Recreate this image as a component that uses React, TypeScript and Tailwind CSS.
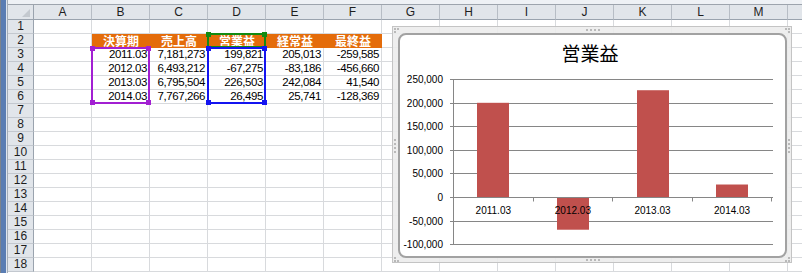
const COLS = ["A", "B", "C", "D", "E", "F", "G", "H", "I", "J", "K", "L", "M", ""];
const HEAD = ["決算期", "売上高", "営業益", "経常益", "最終益"];
const DATA = [
  ["2011.03", "7,181,273", "199,821", "205,013", "-259,585"],
  ["2012.03", "6,493,212", "-67,275", "-83,186", "-456,660"],
  ["2013.03", "6,795,504", "226,503", "242,084", "41,540"],
  ["2014.03", "7,767,266", "26,495", "25,741", "-128,369"],
];
const CHART = [
  { label: "2011.03", value: 199821 },
  { label: "2012.03", value: -67275 },
  { label: "2013.03", value: 226503 },
  { label: "2014.03", value: 26495 },
];
const TICKS = [250000, 200000, 150000, 100000, 50000, 0, -50000, -100000];

const ZERO = 126;
const K = 23.57 / 50000;
const yOf = (v: number) => Math.round(ZERO - v * K) + 0.5;
const fmt = (v: number) => v.toLocaleString("en-US");

function SheetRow({ n }: { n: number }) {
  const data = n >= 3 && n <= 6 ? DATA[n - 3] : null;
  return (
    <div className="flex h-[14px] shrink-0">
      <div className="w-[26px] shrink-0 border-r border-b border-r-[#9aa3ae] border-b-[#c3c8cf] bg-[#e1e5ea] text-center text-[12px] leading-[13px] text-[#1e1e1e]">
        {n}
      </div>
      {COLS.map((c, i) => {
        if (n === 2 && i >= 1 && i <= 5) {
          return (
            <div
              key={i}
              className="w-[58px] shrink-0 bg-[#e46c0a] text-center font-['Noto_Sans_CJK_JP',sans-serif] text-[12px] font-bold leading-[14px] text-white"
            >
              {HEAD[i - 1]}
            </div>
          );
        }
        return (
          <div
            key={i}
            className="w-[58px] shrink-0 overflow-hidden border-r border-b border-[#d8dadd] pr-[2px] text-right text-[11.5px] leading-[13px] tracking-[-0.4px] text-black"
          >
            {data && i >= 1 && i <= 5 ? data[i - 1] : ""}
          </div>
        );
      })}
    </div>
  );
}

function Dots({ vertical = false, count }: { vertical?: boolean; count: number }) {
  return (
    <div className={vertical ? "flex flex-col gap-[2px]" : "flex gap-[2px]"}>
      {Array.from({ length: count }).map((_, i) => (
        <span key={i} className="block h-[2px] w-[2px] bg-[#b9b9b9]" />
      ))}
    </div>
  );
}

function Chart() {
  const catW = 79.6;
  return (
    <div className="absolute left-[392px] top-[26px] flex h-[237px] w-[400px] border border-[#c4c4c4] bg-[#ececec]/90 pl-[5px] pt-[6px] pr-[4px] pb-[4px]">
      <div className="absolute left-[1px] top-[1px] grid grid-cols-2 gap-[1px]">
        <Dots count={1} />
        <Dots count={1} />
        <Dots count={1} />
      </div>
      <div className="absolute right-[1px] top-[1px] grid grid-cols-2 gap-[1px]">
        <Dots count={1} />
        <Dots count={1} />
        <span />
        <Dots count={1} />
      </div>
      <div className="absolute left-[1px] bottom-[0px] grid grid-cols-2 gap-[1px]">
        <Dots count={1} />
        <span />
        <Dots count={1} />
        <Dots count={1} />
      </div>
      <div className="absolute right-[1px] bottom-[0px] grid grid-cols-2 gap-[1px]">
        <span />
        <Dots count={1} />
        <Dots count={1} />
        <Dots count={1} />
      </div>
      <div className="absolute left-[193px] top-[2px]">
        <Dots count={4} />
      </div>
      <div className="absolute left-[193px] bottom-[1px]">
        <Dots count={4} />
      </div>
      <div className="absolute left-[1px] top-[112px]">
        <Dots vertical count={4} />
      </div>
      <div className="absolute right-[1px] top-[112px]">
        <Dots vertical count={4} />
      </div>

      <div className="flex flex-1 flex-col rounded-[8px] border-2 border-[#a2a2a2] bg-white">
        <div className="h-[36px] pr-[5px] text-center font-['Noto_Sans_CJK_JP',sans-serif] text-[19px] leading-[36px] text-black">
          営業益
        </div>
        <svg width="385" height="185" className="block font-['Liberation_Sans',sans-serif]">
          {TICKS.map((t) => (
            <line key={t} x1={50} x2={373} y1={yOf(t)} y2={yOf(t)} stroke="#868686" strokeWidth={1} />
          ))}
          <line x1={53.5} x2={53.5} y1={yOf(250000)} y2={yOf(-100000)} stroke="#868686" strokeWidth={1} />
          {[0, 1, 2, 3, 4].map((i) => {
            const x = Math.round(53 + catW * i) + 0.5;
            return <line key={i} x1={x} x2={x} y1={yOf(0)} y2={yOf(0) + 4} stroke="#868686" strokeWidth={1} />;
          })}
          {CHART.map((d, i) => {
            const cx = 53.5 + catW * (i + 0.5);
            const top = d.value > 0 ? ZERO - d.value * K : ZERO + 1;
            const h = Math.abs(d.value) * K;
            return <rect key={d.label} x={Math.round(cx - 16)} y={top} width={32} height={h} fill="#c0504d" />;
          })}
          {CHART.map((d, i) => (
            <text key={d.label} x={53.5 + catW * (i + 0.5)} y={143} textAnchor="middle" fontSize={10} fill="#000">
              {d.label}
            </text>
          ))}
          {TICKS.map((t) => (
            <text key={t} x={43} y={yOf(t) + 3.5} textAnchor="end" fontSize={10} fill="#000">
              {fmt(t)}
            </text>
          ))}
        </svg>
      </div>
    </div>
  );
}

export default function App() {
  return (
    <div className="relative h-[273px] w-[802px] overflow-hidden bg-white font-['Liberation_Sans','Noto_Sans_CJK_JP',sans-serif]">
      <div className="flex h-full">
        <div className="flex h-full w-[8px] shrink-0">
          <div className="w-[1px] bg-[#7b838d]" />
          <div className="w-[5px] bg-[#5a7db3]" />
          <div className="w-[1px] bg-[#dfe6ef]" />
          <div className="w-[1px] bg-[#a3acb7]" />
        </div>
        <div className="flex min-w-0 flex-1 flex-col">
          <div className="h-[5px] shrink-0 border-b border-[#9da4ad] bg-[#eef1f5]" />
          <div className="flex h-[15px] shrink-0">
            <div className="relative w-[26px] shrink-0 border-r border-b border-[#9aa3ae] bg-[#e1e5ea]">
              <svg width="8" height="8" className="absolute right-[3px] bottom-[2px]">
                <polygon points="8,0 8,8 0,8" fill="#c4c9cf" />
              </svg>
            </div>
            {COLS.map((c, i) => (
              <div
                key={i}
                className="w-[58px] shrink-0 border-r border-b border-r-[#b7bdc5] border-b-[#9aa3ae] bg-[#e1e5ea] text-center text-[12px] leading-[14px] text-[#1e1e1e]"
              >
                {c}
              </div>
            ))}
          </div>
          {Array.from({ length: 18 }).map((_, i) => (
            <SheetRow key={i} n={i + 1} />
          ))}
        </div>
      </div>

      {/* chart source highlights */}
      <div className="absolute left-[207px] top-[33px] h-[15px] w-[59px] border-2 border-[#128a12]" />
      <div className="absolute left-[91px] top-[47px] h-[57px] w-[59px] border-2 border-[#a21fd2]" />
      <div className="absolute left-[207px] top-[47px] h-[57px] w-[59px] border-2 border-[#1414f0]" />

      <div className="absolute left-[206px] top-[32px] h-[5px] w-[5px] bg-[#128a12]" />
      <div className="absolute left-[262px] top-[32px] h-[5px] w-[5px] bg-[#128a12]" />

      <div className="absolute left-[90px] top-[46px] h-[5px] w-[5px] bg-[#a21fd2]" />
      <div className="absolute left-[146px] top-[46px] h-[5px] w-[5px] bg-[#a21fd2]" />
      <div className="absolute left-[90px] top-[100px] h-[5px] w-[5px] bg-[#a21fd2]" />
      <div className="absolute left-[146px] top-[100px] h-[5px] w-[5px] bg-[#a21fd2]" />

      <div className="absolute left-[206px] top-[46px] h-[5px] w-[5px] bg-[#1414f0]" />
      <div className="absolute left-[262px] top-[46px] h-[5px] w-[5px] bg-[#1414f0]" />
      <div className="absolute left-[206px] top-[100px] h-[5px] w-[5px] bg-[#1414f0]" />
      <div className="absolute left-[262px] top-[100px] h-[5px] w-[5px] bg-[#1414f0]" />

      <Chart />
    </div>
  );
}
